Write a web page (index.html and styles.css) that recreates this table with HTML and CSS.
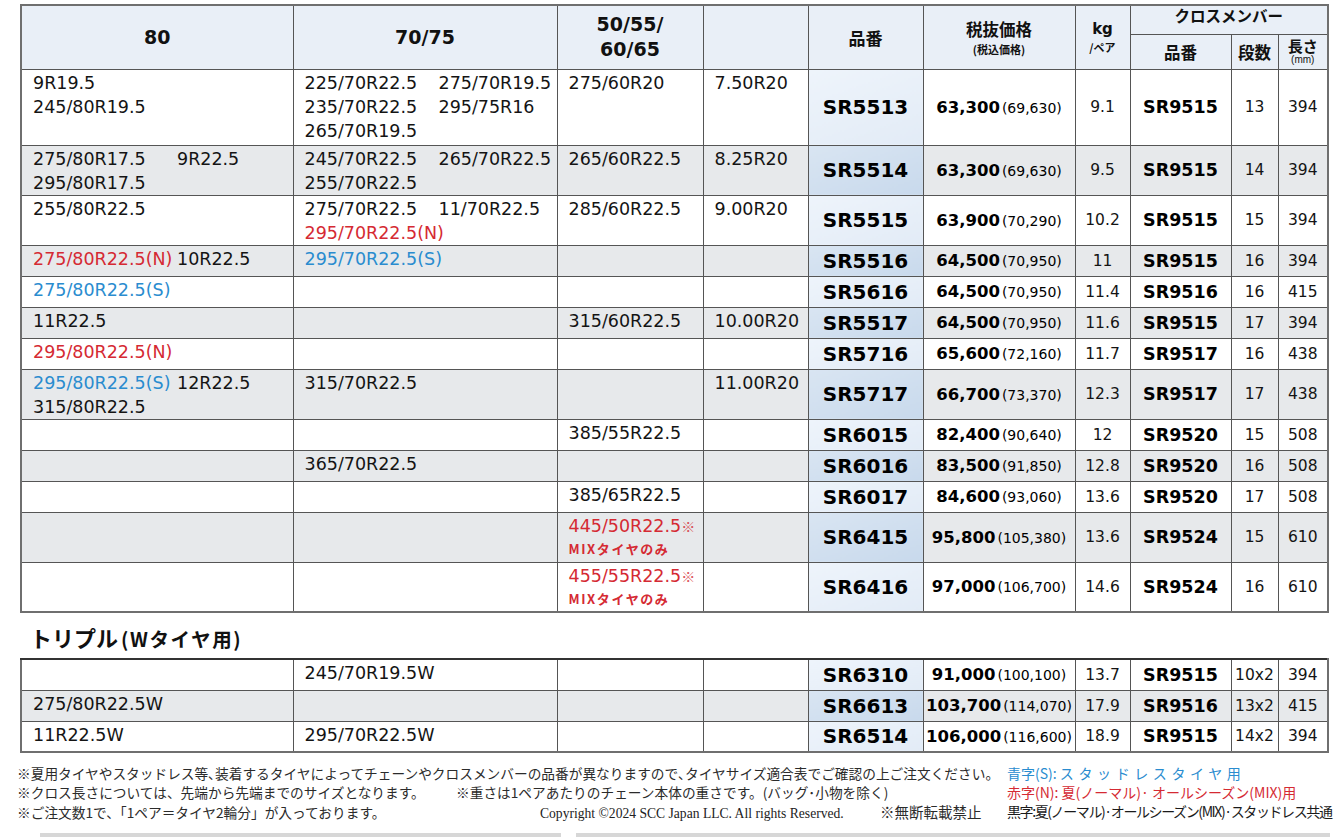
FILE: index.html
```html
<!DOCTYPE html>
<html lang="ja">
<head>
<meta charset="utf-8">
<title>タイヤチェーン適合表</title>
<link rel="stylesheet" href="styles.css">
</head>
<body>
<div class="page">
  <table class="chart">
    <colgroup>
      <col class="w1"><col class="w2"><col class="w3"><col class="w4"><col class="w5">
      <col class="w6"><col class="w7"><col class="w8"><col class="w9"><col class="w10">
    </colgroup>
    <thead>
      <tr class="h-top">
        <th rowspan="2" class="hs">80</th>
        <th rowspan="2" class="hs">70/75</th>
        <th rowspan="2" class="hs">50/55/<br>60/65</th>
        <th rowspan="2"></th>
        <th rowspan="2" class="hj hcode">品番</th>
        <th rowspan="2" class="hj hprice"><span class="big">税抜価格</span><span class="small">(税込価格)</span></th>
        <th rowspan="2" class="hkg"><span class="kg">kg</span><span class="small">/ペア</span></th>
        <th colspan="3" class="hj hcross">クロスメンバー</th>
      </tr>
      <tr class="h-sub">
        <th class="hj hsub">品番</th>
        <th class="hj hsub">段数</th>
        <th class="hj hlen"><span class="big">長さ</span><span class="mm">(mm)</span></th>
      </tr>
    </thead>
    <tbody>
      <tr class="r3">
        <td class="sz c80"><div class="ln"><span>9R19.5</span></div><div class="ln"><span>245/80R19.5</span></div></td>
        <td class="sz c70"><div class="ln"><span>225/70R22.5</span><span>275/70R19.5</span></div><div class="ln"><span>235/70R22.5</span><span>295/75R16</span></div><div class="ln"><span>265/70R19.5</span></div></td>
        <td class="sz"><div class="ln"><span>275/60R20</span></div></td>
        <td class="sz"><div class="ln"><span>7.50R20</span></div></td>
        <td class="code">SR5513</td>
        <td class="price"><b>63,300</b><span>(69,630)</span></td>
        <td class="num">9.1</td>
        <td class="xcode">SR9515</td>
        <td class="num">13</td>
        <td class="num">394</td>
      </tr>
      <tr class="r2 g">
        <td class="sz c80"><div class="ln"><span>275/80R17.5</span><span>9R22.5</span></div><div class="ln"><span>295/80R17.5</span></div></td>
        <td class="sz c70"><div class="ln"><span>245/70R22.5</span><span>265/70R22.5</span></div><div class="ln"><span>255/70R22.5</span></div></td>
        <td class="sz"><div class="ln"><span>265/60R22.5</span></div></td>
        <td class="sz"><div class="ln"><span>8.25R20</span></div></td>
        <td class="code">SR5514</td>
        <td class="price"><b>63,300</b><span>(69,630)</span></td>
        <td class="num">9.5</td>
        <td class="xcode">SR9515</td>
        <td class="num">14</td>
        <td class="num">394</td>
      </tr>
      <tr class="r2">
        <td class="sz c80"><div class="ln"><span>255/80R22.5</span></div></td>
        <td class="sz c70"><div class="ln"><span>275/70R22.5</span><span>11/70R22.5</span></div><div class="ln"><span class="red">295/70R22.5(N)</span></div></td>
        <td class="sz"><div class="ln"><span>285/60R22.5</span></div></td>
        <td class="sz"><div class="ln"><span>9.00R20</span></div></td>
        <td class="code">SR5515</td>
        <td class="price"><b>63,900</b><span>(70,290)</span></td>
        <td class="num">10.2</td>
        <td class="xcode">SR9515</td>
        <td class="num">15</td>
        <td class="num">394</td>
      </tr>
      <tr class="r1 g">
        <td class="sz c80"><div class="ln"><span class="red">275/80R22.5(N)</span><span>10R22.5</span></div></td>
        <td class="sz c70"><div class="ln"><span class="blue">295/70R22.5(S)</span></div></td>
        <td class="sz"></td>
        <td class="sz"></td>
        <td class="code">SR5516</td>
        <td class="price"><b>64,500</b><span>(70,950)</span></td>
        <td class="num">11</td>
        <td class="xcode">SR9515</td>
        <td class="num">16</td>
        <td class="num">394</td>
      </tr>
      <tr class="r1">
        <td class="sz c80"><div class="ln"><span class="blue">275/80R22.5(S)</span></div></td>
        <td class="sz c70"></td>
        <td class="sz"></td>
        <td class="sz"></td>
        <td class="code">SR5616</td>
        <td class="price"><b>64,500</b><span>(70,950)</span></td>
        <td class="num">11.4</td>
        <td class="xcode">SR9516</td>
        <td class="num">16</td>
        <td class="num">415</td>
      </tr>
      <tr class="r1 g">
        <td class="sz c80"><div class="ln"><span>11R22.5</span></div></td>
        <td class="sz c70"></td>
        <td class="sz"><div class="ln"><span>315/60R22.5</span></div></td>
        <td class="sz"><div class="ln"><span>10.00R20</span></div></td>
        <td class="code">SR5517</td>
        <td class="price"><b>64,500</b><span>(70,950)</span></td>
        <td class="num">11.6</td>
        <td class="xcode">SR9515</td>
        <td class="num">17</td>
        <td class="num">394</td>
      </tr>
      <tr class="r1">
        <td class="sz c80"><div class="ln"><span class="red">295/80R22.5(N)</span></div></td>
        <td class="sz c70"></td>
        <td class="sz"></td>
        <td class="sz"></td>
        <td class="code">SR5716</td>
        <td class="price"><b>65,600</b><span>(72,160)</span></td>
        <td class="num">11.7</td>
        <td class="xcode">SR9517</td>
        <td class="num">16</td>
        <td class="num">438</td>
      </tr>
      <tr class="r2 g">
        <td class="sz c80"><div class="ln"><span class="blue">295/80R22.5(S)</span><span>12R22.5</span></div><div class="ln"><span>315/80R22.5</span></div></td>
        <td class="sz c70"><div class="ln"><span>315/70R22.5</span></div></td>
        <td class="sz"></td>
        <td class="sz"><div class="ln"><span>11.00R20</span></div></td>
        <td class="code">SR5717</td>
        <td class="price"><b>66,700</b><span>(73,370)</span></td>
        <td class="num">12.3</td>
        <td class="xcode">SR9517</td>
        <td class="num">17</td>
        <td class="num">438</td>
      </tr>
      <tr class="r1">
        <td class="sz c80"></td>
        <td class="sz c70"></td>
        <td class="sz"><div class="ln"><span>385/55R22.5</span></div></td>
        <td class="sz"></td>
        <td class="code">SR6015</td>
        <td class="price"><b>82,400</b><span>(90,640)</span></td>
        <td class="num">12</td>
        <td class="xcode">SR9520</td>
        <td class="num">15</td>
        <td class="num">508</td>
      </tr>
      <tr class="r1 g">
        <td class="sz c80"></td>
        <td class="sz c70"><div class="ln"><span>365/70R22.5</span></div></td>
        <td class="sz"></td>
        <td class="sz"></td>
        <td class="code">SR6016</td>
        <td class="price"><b>83,500</b><span>(91,850)</span></td>
        <td class="num">12.8</td>
        <td class="xcode">SR9520</td>
        <td class="num">16</td>
        <td class="num">508</td>
      </tr>
      <tr class="r1">
        <td class="sz c80"></td>
        <td class="sz c70"></td>
        <td class="sz"><div class="ln"><span>385/65R22.5</span></div></td>
        <td class="sz"></td>
        <td class="code">SR6017</td>
        <td class="price"><b>84,600</b><span>(93,060)</span></td>
        <td class="num">13.6</td>
        <td class="xcode">SR9520</td>
        <td class="num">17</td>
        <td class="num">508</td>
      </tr>
      <tr class="r2 g">
        <td class="sz c80"></td>
        <td class="sz c70"></td>
        <td class="sz red"><div class="ln"><span>445/50R22.5<i class="kome">※</i></span></div><div class="mix">MIXタイヤのみ</div></td>
        <td class="sz"></td>
        <td class="code">SR6415</td>
        <td class="price"><b>95,800</b><span>(105,380)</span></td>
        <td class="num">13.6</td>
        <td class="xcode">SR9524</td>
        <td class="num">15</td>
        <td class="num">610</td>
      </tr>
      <tr class="r2">
        <td class="sz c80"></td>
        <td class="sz c70"></td>
        <td class="sz red"><div class="ln"><span>455/55R22.5<i class="kome">※</i></span></div><div class="mix">MIXタイヤのみ</div></td>
        <td class="sz"></td>
        <td class="code">SR6416</td>
        <td class="price"><b>97,000</b><span>(106,700)</span></td>
        <td class="num">14.6</td>
        <td class="xcode">SR9524</td>
        <td class="num">16</td>
        <td class="num">610</td>
      </tr>
    </tbody>
  </table>

  <h2 class="sec-title">トリプル<span>(Wタイヤ用)</span></h2>

  <table class="chart triple">
    <colgroup>
      <col class="w1"><col class="w2"><col class="w3"><col class="w4"><col class="w5">
      <col class="w6"><col class="w7"><col class="w8"><col class="w9"><col class="w10">
    </colgroup>
    <tbody>
      <tr class="r1">
        <td class="sz c80"></td>
        <td class="sz c70"><div class="ln"><span>245/70R19.5W</span></div></td>
        <td class="sz"></td>
        <td class="sz"></td>
        <td class="code">SR6310</td>
        <td class="price"><b>91,000</b><span>(100,100)</span></td>
        <td class="num">13.7</td>
        <td class="xcode">SR9515</td>
        <td class="num">10x2</td>
        <td class="num">394</td>
      </tr>
      <tr class="r1 g">
        <td class="sz c80"><div class="ln"><span>275/80R22.5W</span></div></td>
        <td class="sz c70"></td>
        <td class="sz"></td>
        <td class="sz"></td>
        <td class="code">SR6613</td>
        <td class="price"><b>103,700</b><span>(114,070)</span></td>
        <td class="num">17.9</td>
        <td class="xcode">SR9516</td>
        <td class="num">13x2</td>
        <td class="num">415</td>
      </tr>
      <tr class="r1">
        <td class="sz c80"><div class="ln"><span>11R22.5W</span></div></td>
        <td class="sz c70"><div class="ln"><span>295/70R22.5W</span></div></td>
        <td class="sz"></td>
        <td class="sz"></td>
        <td class="code">SR6514</td>
        <td class="price"><b>106,000</b><span>(116,600)</span></td>
        <td class="num">18.9</td>
        <td class="xcode">SR9515</td>
        <td class="num">14x2</td>
        <td class="num">394</td>
      </tr>
    </tbody>
  </table>

  <footer class="notes">
    <div class="notes-main">
      <div class="l1">※夏用タイヤやスタッドレス等､装着するタイヤによってチェーンやクロスメンバーの品番が異なりますので､タイヤサイズ適合表でご確認の上ご注文ください。</div>
      <div><span class="n2a">※クロス長さについては、先端から先端までのサイズとなります。</span><span>※重さは1ペアあたりのチェーン本体の重さです。(バッグ･小物を除く)</span></div>
      <div><span class="n3a">※ご注文数1で、「1ペア＝タイヤ2輪分」が入っております。</span><span class="copy">Copyright ©2024 SCC Japan LLC. All rights Reserved.</span><span class="nodup">※無断転載禁止</span></div>
    </div>
    <div class="legend">
      <div class="lg-blue">青字(S): <span class="spaced">スタッドレスタイヤ用</span></div>
      <div class="lg-red">赤字(N): 夏(ノーマル)· オールシーズン(MIX)用</div>
      <div class="lg-black">黒字:夏(ノーマル)·オールシーズン(MIX)·スタッドレス共通</div>
    </div>
  </footer>

  <div class="bars"><span class="bar bar-a"></span><span class="bar bar-b"></span></div>
</div>
</body>
</html>
```

FILE: styles.css
```css
html, body {
  margin: 0;
  padding: 0;
  background: #fff;
  overflow: hidden;
}
body {
  font-family: "DejaVu Sans", "Liberation Sans", sans-serif;
  color: #141414;
}
.page {
  padding: 4px 0 0 17px;
}

/* ---------- table ---------- */
.chart {
  margin-left: 3px;
  width: 1307px;
  table-layout: fixed;
  border-collapse: collapse;
  border: 2px solid #6f6f6f;
}
.chart th,
.chart td {
  border: 1px solid #555;
  padding: 0;
}
.w1 { width: 272px; }
.w2 { width: 264px; }
.w3 { width: 146px; }
.w4 { width: 105px; }
.w5 { width: 115px; }
.w6 { width: 152px; }
.w7 { width: 55px; }
.w8 { width: 101px; }
.w9 { width: 47px; }
.w10 { width: 50px; }

/* header */
.chart thead th {
  background: #e9eff7;
  color: #111;
  font-weight: 700;
  text-align: center;
  vertical-align: middle;
}
.h-top { height: 29px; }
.h-sub { height: 35px; }
.hs {
  font-family: "DejaVu Sans", sans-serif;
  font-size: 19px;
  line-height: 25px;
}
.hj {
  font-family: "Noto Sans CJK JP", sans-serif;
}
.hcode {
  font-size: 17px;
  padding-top: 4px;
}
.hprice {
  padding-top: 3px;
}
.hprice .big,
.hkg .kg,
.hlen .big {
  display: block;
}
.hprice .big {
  font-size: 16.5px;
  line-height: 24px;
}
.small {
  display: block;
  font-family: "Noto Sans CJK JP", sans-serif;
  font-size: 11px;
  line-height: 16px;
}
.hkg {
  padding-top: 3px;
}
.hkg .kg {
  font-family: "DejaVu Sans", sans-serif;
  font-size: 15px;
  line-height: 19px;
}
.chart thead th.hcross {
  font-size: 15.5px;
  line-height: 18px;
  vertical-align: top;
}
.hsub {
  font-size: 16.5px;
  padding-top: 2px;
}
.hlen .big {
  font-size: 15px;
  line-height: 16px;
}
.hlen .mm {
  display: block;
  font-family: "Liberation Sans", sans-serif;
  font-size: 10px;
  line-height: 12px;
  font-weight: 400;
}

/* body rows */
.r1 { height: 31px; }
.r2 { height: 50px; }
.r3 { height: 76px; }
.chart td { background: #fff; }
.chart tr.g td { background: #e7e9eb; }

.sz {
  vertical-align: top;
  padding: 1px 0 0 11px !important;
  font-size: 17.5px;
  line-height: 24px;
  white-space: nowrap;
  overflow: hidden;
}
.ln { display: flex; }
.c80 .ln > span:first-child { width: 144px; }
.c70 .ln > span:first-child { width: 134px; }
.red { color: #d52a33; }
.blue { color: #2a8ccf; }
.kome {
  font-style: normal;
  font-family: "Noto Sans CJK JP", sans-serif;
  font-size: 14px;
  font-weight: 300;
  opacity: 0.8;
}
.mix {
  font-family: "Noto Sans CJK JP", sans-serif;
  font-size: 13px;
  line-height: 22px;
  font-weight: 700;
  letter-spacing: 1.6px;
}

.code {
  text-align: center;
  vertical-align: middle;
  font-family: "DejaVu Sans", sans-serif;
  font-weight: 700;
  font-size: 20px;
  color: #000;
}
.chart tr td.code {
  background: linear-gradient(160deg, #eef4fb, #e2ebf6);
}
.chart tr.g td.code {
  background: linear-gradient(160deg, #d9e5f2, #c8d9ec);
}
.price {
  text-align: center;
  vertical-align: middle;
  white-space: nowrap;
  color: #000;
}
.price b {
  font-size: 16.5px;
  font-weight: 700;
}
.price span {
  font-size: 14px;
  margin-left: 2px;
}
.num {
  text-align: center;
  vertical-align: middle;
  font-size: 15.5px;
}
.xcode {
  text-align: center;
  vertical-align: middle;
  font-weight: 700;
  font-size: 17.5px;
  color: #000;
}
.triple {
  border-top-color: #333;
}

/* section title */
.sec-title {
  margin: 10px 0 5px 13px;
  font-family: "Noto Sans CJK JP", sans-serif;
  font-size: 22px;
  line-height: 28px;
  font-weight: 700;
  color: #111;
}
.sec-title span {
  font-size: 19.5px;
  margin-left: 3px;
  letter-spacing: 1.6px;
}

/* footer notes */
.notes {
  display: flex;
  margin-top: 11px;
  font-family: "Noto Sans CJK JP", sans-serif;
  font-size: 13.7px;
  line-height: 19px;
  color: #2b2b2b;
  white-space: nowrap;
}
.notes-main {
  width: 990px;
  flex: none;
}
.n2a {
  display: inline-block;
  width: 439px;
}
.n3a {
  display: inline-block;
  width: 523px;
}
.copy {
  display: inline-block;
  width: 340px;
  font-family: "Liberation Serif", serif;
  font-size: 13.6px;
  color: #222;
}
.nodup {
  font-size: 14.5px;
}
.legend {
  font-size: 14px;
}
.lg-blue { color: #2a8ccf; }
.lg-blue .spaced { letter-spacing: 4.6px; }
.lg-red { color: #d52a33; }
.lg-black {
  color: #1a1a1a;
  letter-spacing: -1.4px;
}

/* bottom bars */
.bars {
  display: flex;
  gap: 15px;
  margin: 10px 0 0 23px;
}
.bar {
  display: block;
  height: 7px;
  background: #d7d7d7;
}
.bar-a { width: 521px; }
.bar-b { width: 754px; }
```
